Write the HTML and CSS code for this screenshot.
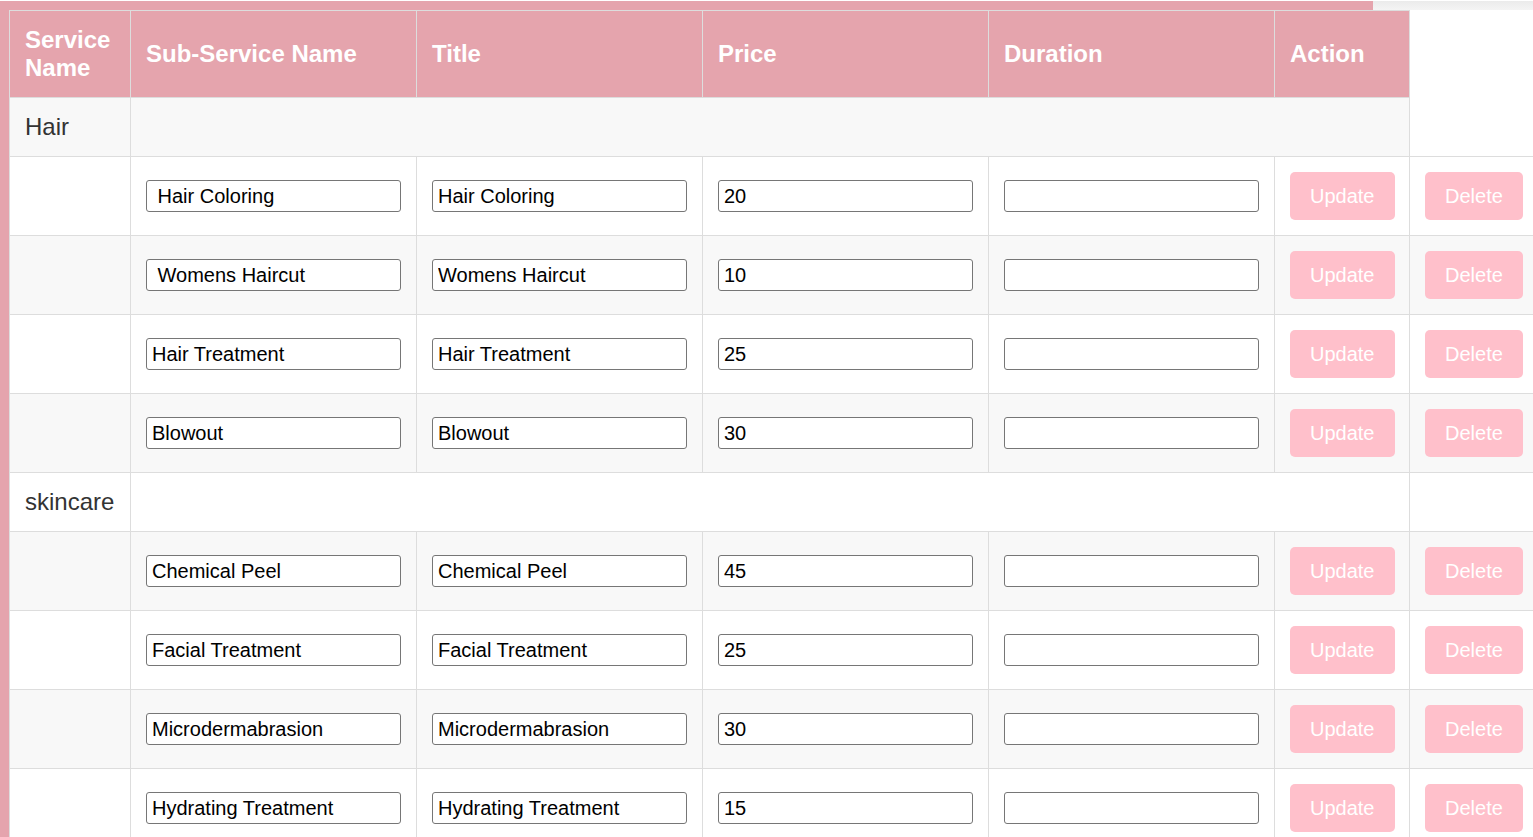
FILE: index.html
```html
<!DOCTYPE html>
<html lang="en">
<head>
<meta charset="utf-8">
<title>Services</title>
<link rel="stylesheet" href="styles.css">
</head>
<body>
<div class="progress"><div class="progress-fill" style="width:1373px"></div></div>
<div class="layout">
  <div class="rail"></div>
  <table class="services">
    <colgroup>
      <col class="c-service"><col class="c-wide"><col class="c-wide"><col class="c-wide"><col class="c-wide"><col class="c-action"><col class="c-delete">
    </colgroup>
    <thead>
      <tr>
        <th>Service Name</th>
        <th>Sub-Service Name</th>
        <th>Title</th>
        <th>Price</th>
        <th>Duration</th>
        <th>Action</th>
      </tr>
    </thead>
    <tbody>
      <tr class="group"><td>Hair</td><td colspan="5"></td></tr>
      <tr>
        <td></td>
        <td><input class="field" type="text" value=" Hair Coloring"></td>
        <td><input class="field" type="text" value="Hair Coloring"></td>
        <td><input class="field" type="text" value="20"></td>
        <td><input class="field" type="text" value=""></td>
        <td><button class="btn">Update</button></td>
        <td><button class="btn">Delete</button></td>
      </tr>
      <tr>
        <td></td>
        <td><input class="field" type="text" value=" Womens Haircut"></td>
        <td><input class="field" type="text" value="Womens Haircut"></td>
        <td><input class="field" type="text" value="10"></td>
        <td><input class="field" type="text" value=""></td>
        <td><button class="btn">Update</button></td>
        <td><button class="btn">Delete</button></td>
      </tr>
      <tr>
        <td></td>
        <td><input class="field" type="text" value="Hair Treatment"></td>
        <td><input class="field" type="text" value="Hair Treatment"></td>
        <td><input class="field" type="text" value="25"></td>
        <td><input class="field" type="text" value=""></td>
        <td><button class="btn">Update</button></td>
        <td><button class="btn">Delete</button></td>
      </tr>
      <tr>
        <td></td>
        <td><input class="field" type="text" value="Blowout"></td>
        <td><input class="field" type="text" value="Blowout"></td>
        <td><input class="field" type="text" value="30"></td>
        <td><input class="field" type="text" value=""></td>
        <td><button class="btn">Update</button></td>
        <td><button class="btn">Delete</button></td>
      </tr>
      <tr class="group"><td>skincare</td><td colspan="5"></td></tr>
      <tr>
        <td></td>
        <td><input class="field" type="text" value="Chemical Peel"></td>
        <td><input class="field" type="text" value="Chemical Peel"></td>
        <td><input class="field" type="text" value="45"></td>
        <td><input class="field" type="text" value=""></td>
        <td><button class="btn">Update</button></td>
        <td><button class="btn">Delete</button></td>
      </tr>
      <tr>
        <td></td>
        <td><input class="field" type="text" value="Facial Treatment"></td>
        <td><input class="field" type="text" value="Facial Treatment"></td>
        <td><input class="field" type="text" value="25"></td>
        <td><input class="field" type="text" value=""></td>
        <td><button class="btn">Update</button></td>
        <td><button class="btn">Delete</button></td>
      </tr>
      <tr>
        <td></td>
        <td><input class="field" type="text" value="Microdermabrasion"></td>
        <td><input class="field" type="text" value="Microdermabrasion"></td>
        <td><input class="field" type="text" value="30"></td>
        <td><input class="field" type="text" value=""></td>
        <td><button class="btn">Update</button></td>
        <td><button class="btn">Delete</button></td>
      </tr>
      <tr>
        <td></td>
        <td><input class="field" type="text" value="Hydrating Treatment"></td>
        <td><input class="field" type="text" value="Hydrating Treatment"></td>
        <td><input class="field" type="text" value="15"></td>
        <td><input class="field" type="text" value=""></td>
        <td><button class="btn">Update</button></td>
        <td><button class="btn">Delete</button></td>
      </tr>
    </tbody>
  </table>
</div>
</body>
</html>
```

FILE: styles.css
```css
html, body {
  margin: 0;
  padding: 0;
  overflow: hidden;
  background: #ffffff;
  font-family: "Liberation Sans", Arial, sans-serif;
}

.progress {
  margin-top: 1px;
  height: 9px;
  background: linear-gradient(#ebebeb, #f4f4f4);
  display: flex;
}

.progress-fill {
  height: 100%;
  background: #e5a4ad;
}

.layout {
  display: flex;
  align-items: stretch;
  min-height: 900px;
}

.rail {
  flex: 0 0 9px;
  background: #e5a4ad;
}

.services {
  flex: 0 0 auto;
  border-collapse: collapse;
  table-layout: fixed;
  width: 1527px;
  align-self: flex-start;
}

.c-service { width: 121px; }
.c-wide { width: 286px; }
.c-action { width: 135px; }
.c-delete { width: 127px; }

.services th,
.services td {
  border: 1px solid #dddddd;
  padding: 15px;
  text-align: left;
  vertical-align: middle;
}

.services th {
  background: #e5a4ad;
  color: #ffffff;
  font-weight: bold;
  font-size: 24px;
  line-height: 28px;
  border-color: #dddddd;
}

.services tbody tr:nth-child(odd) td {
  background: #f8f8f8;
}

.group td {
  font-size: 24px;
  line-height: 28px;
  color: #333333;
}

.field {
  box-sizing: border-box;
  width: 255px;
  height: 32px;
  margin: 0;
  padding: 0 5px;
  border: 1px solid #767676;
  border-radius: 3px;
  background: #ffffff;
  color: #000000;
  font-family: "Liberation Sans", Arial, sans-serif;
  font-size: 20px;
  vertical-align: middle;
}

.btn {
  box-sizing: border-box;
  height: 48px;
  margin: 0;
  padding: 0 20px;
  border: none;
  border-radius: 5px;
  background: #ffc0cb;
  color: #ffffff;
  font-family: "Liberation Sans", Arial, sans-serif;
  font-size: 20px;
  vertical-align: middle;
  cursor: pointer;
}
```
